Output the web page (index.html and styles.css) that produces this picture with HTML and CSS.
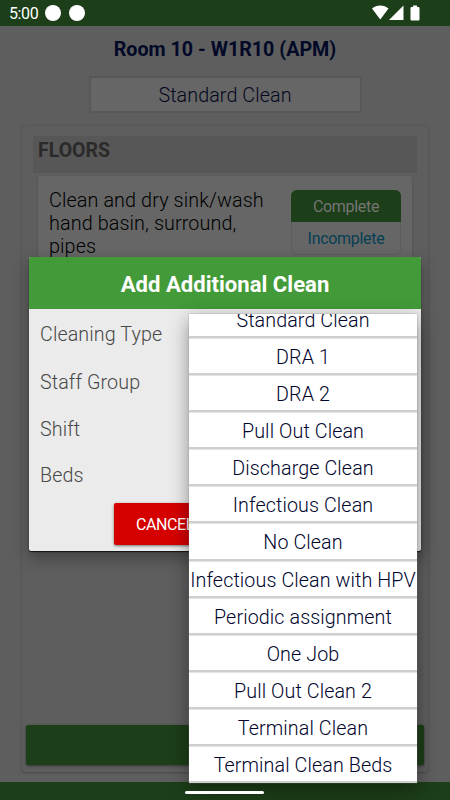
FILE: index.html
```html
<!DOCTYPE html>
<html lang="en">
<head>
<meta charset="utf-8">
<title>Room 10 - W1R10 (APM)</title>
<link rel="stylesheet" href="styles.css">
</head>
<body>
<div class="screen">
	<div class="statusbar">
		<span class="clock">5:00</span>
		<span class="dot"></span>
		<span class="dot"></span>
		<svg class="status-icons" width="50" height="16" viewBox="0 0 50 16" fill="#fff">
			<path d="M0 3.5C4.5-.4 12 -.4 16.500 3.500L8.250 14.500z"/>
			<path d="M31.500 .5V15H17z"/>
			<path d="M41 2V.5h4V2h1.500q1 0 1 1v11.500q0 1-1 1h-7q-1 0-1-1V3q0-1 1-1z"/>
		</svg>
	</div>

	<div class="page">
		<h1 class="room">Room 10 - W1R10 (APM)</h1>
		<div class="select">Standard Clean</div>
		<div class="card">
			<div class="section">FLOORS</div>
			<div class="task">
				<p class="task-text">Clean and dry sink/wash hand basin, surround, pipes</p>
				<div class="toggle">
					<div class="complete">Complete</div>
					<div class="incomplete">Incomplete</div>
				</div>
			</div>
			<div class="submit"></div>
		</div>
	</div>

	<div class="navbar"></div>
</div>

<div class="dialog">
	<h2 class="dialog-title">Add Additional Clean</h2>
	<div class="fields">
		<div class="field">Cleaning Type</div>
		<div class="field">Staff Group</div>
		<div class="field">Shift</div>
		<div class="field">Beds</div>
	</div>
	<div class="cancel">CANCEL</div>
</div>

<div class="dropdown">
	<div class="option">Standard Clean</div>
	<div class="option">DRA 1</div>
	<div class="option">DRA 2</div>
	<div class="option">Pull Out Clean</div>
	<div class="option">Discharge Clean</div>
	<div class="option">Infectious Clean</div>
	<div class="option">No Clean</div>
	<div class="option">Infectious Clean with HPV</div>
	<div class="option">Periodic assignment</div>
	<div class="option">One Job</div>
	<div class="option">Pull Out Clean 2</div>
	<div class="option">Terminal Clean</div>
	<div class="option">Terminal Clean Beds</div>
</div>
<div class="handle"></div>
</body>
</html>
```

FILE: styles.css
```css
* {
	box-sizing: border-box;
}
body {
	margin: 0;
	font-family: Roboto, sans-serif;
	font-size: 20px;
	overflow: hidden;
}
h1, h2, p {
	margin: 0;
}
.screen {
	display: flex;
	flex-direction: column;
	height: 800px;
	background: #5e5e5e;
}

/* status bar */
.statusbar {
	display: flex;
	align-items: center;
	height: 26px;
	padding: 0 28px 0 9px;
	background: #1c3e18;
	color: #fff;
}
.clock {
	width: 36px;
	font-size: 16px;
	line-height: 28px;
	letter-spacing: -0.4px;
	padding-top: 2px;
}
.dot {
	width: 16px;
	height: 16px;
	margin-right: 8px;
	border-radius: 50%;
	background: #fff;
}
.status-icons {
	margin-left: auto;
}

/* dimmed page */
.page {
	flex: 1;
	display: flex;
	flex-direction: column;
	align-items: center;
}
.room {
	margin-top: 12px;
	font-size: 19.700px;
	line-height: 24px;
	font-weight: bold;
	color: #020927;
}
.select {
	width: 273px;
	height: 37px;
	margin-top: 14px;
	border: 2px solid #585858;
	background: #666;
	color: #04071e;
	font-weight: 350;
	font-size: 19.700px;
	line-height: 35px;
	text-align: center;
	letter-spacing: 0.1px;
}
.card {
	display: flex;
	flex-direction: column;
	width: 406px;
	height: 646px;
	margin-top: 13px;
	padding: 10px 4px 7px;
	border-radius: 4px;
	background: #5e5e5e;
	box-shadow: 0 0 2px #505050, 0 1px 2px #484848;
}
.section {
	height: 37px;
	margin: 0 7px;
	padding-left: 5px;
	background: #575757;
	color: #2a2a2a;
	font-size: 19.500px;
	font-weight: bold;
	line-height: 29px;
}
.task {
	display: flex;
	justify-content: space-between;
	height: 110px;
	margin: 3px 12px 0;
	padding: 13px 11px 0;
	border-radius: 2px;
	background: #666;
	box-shadow: 0 1px 2px #484848;
}
.task-text {
	width: 225px;
	font-size: 19.800px;
	font-weight: 350;
	line-height: 23px;
	letter-spacing: 0.1px;
	color: #000;
}
.toggle {
	width: 110px;
	height: 65px;
	margin-top: 1px;
	border: 1px solid #5e5e5e;
	border-radius: 6px;
	font-size: 16px;
	line-height: 34px;
	text-align: center;
}
.complete {
	height: 32px;
	margin: -1px -1px 0;
	border-radius: 6px 6px 0 0;
	background: #1c3e18;
	color: #757575;
	letter-spacing: -0.300px;
}
.incomplete {
	line-height: 34px;
	color: #053f54;
	letter-spacing: -0.300px;
}
.submit {
	height: 40px;
	margin-top: auto;
	border-radius: 2px;
	background: #1c3e18;
	box-shadow: 0 1px 3px #333;
}
.navbar {
	height: 18px;
	background: #1c3e18;
}

/* dialog */
.dialog {
	position: absolute;
	left: 29px;
	top: 257px;
	width: 392px;
	height: 294px;
	border-radius: 2px;
	background: #ebebeb;
	box-shadow: 0 1px 1px #111, 0 6px 16px rgba(0,0,0,0.35);
	overflow: hidden;
}
.dialog-title {
	height: 52px;
	background: #439a38;
	color: #fff;
	font-size: 22.100px;
	line-height: 55px;
	text-align: center;
}
.fields {
	padding: 1px 11px 0;
	color: #484848;
	font-size: 19.700px;
	font-weight: 350;
	letter-spacing: 0.1px;
}
.field {
	height: 47.500px;
	line-height: 50px;
}
.field:last-child {
	line-height: 46px;
}
.cancel {
	width: 105px;
	height: 42px;
	margin: 3px 0 0 85px;
	padding-left: 22px;
	border-radius: 2px;
	background: #d50000;
	box-shadow: 0 1px 3px rgba(0,0,0,0.5);
	color: #fff;
	font-size: 16px;
	line-height: 43px;
	letter-spacing: -0.4px;
}

/* open list, scrolled a little past the first option */
.dropdown {
	position: absolute;
	left: 189px;
	top: 314px;
	width: 228px;
	height: 469px;
	display: flex;
	flex-direction: column;
	justify-content: flex-end;
	overflow: hidden;
	background: #fff;
	box-shadow: 0 0 1px #777, 0 6px 18px rgba(0,0,0,0.4);
}
.option {
	flex: none;
	height: 37.080px;
	border: 1px solid #e4e4e4;
	border-bottom: 2px solid #cfcfcf;
	border-width: 1px 0 2px;
	color: #00042c;
	font-size: 19.700px;
	font-weight: 350;
	line-height: 37.500px;
	text-align: center;
	white-space: nowrap;
	letter-spacing: 0.1px;
}
.handle {
	position: absolute;
	left: 185px;
	top: 791px;
	width: 79px;
	height: 3px;
	border-radius: 2px;
	background: #fff;
}
```
